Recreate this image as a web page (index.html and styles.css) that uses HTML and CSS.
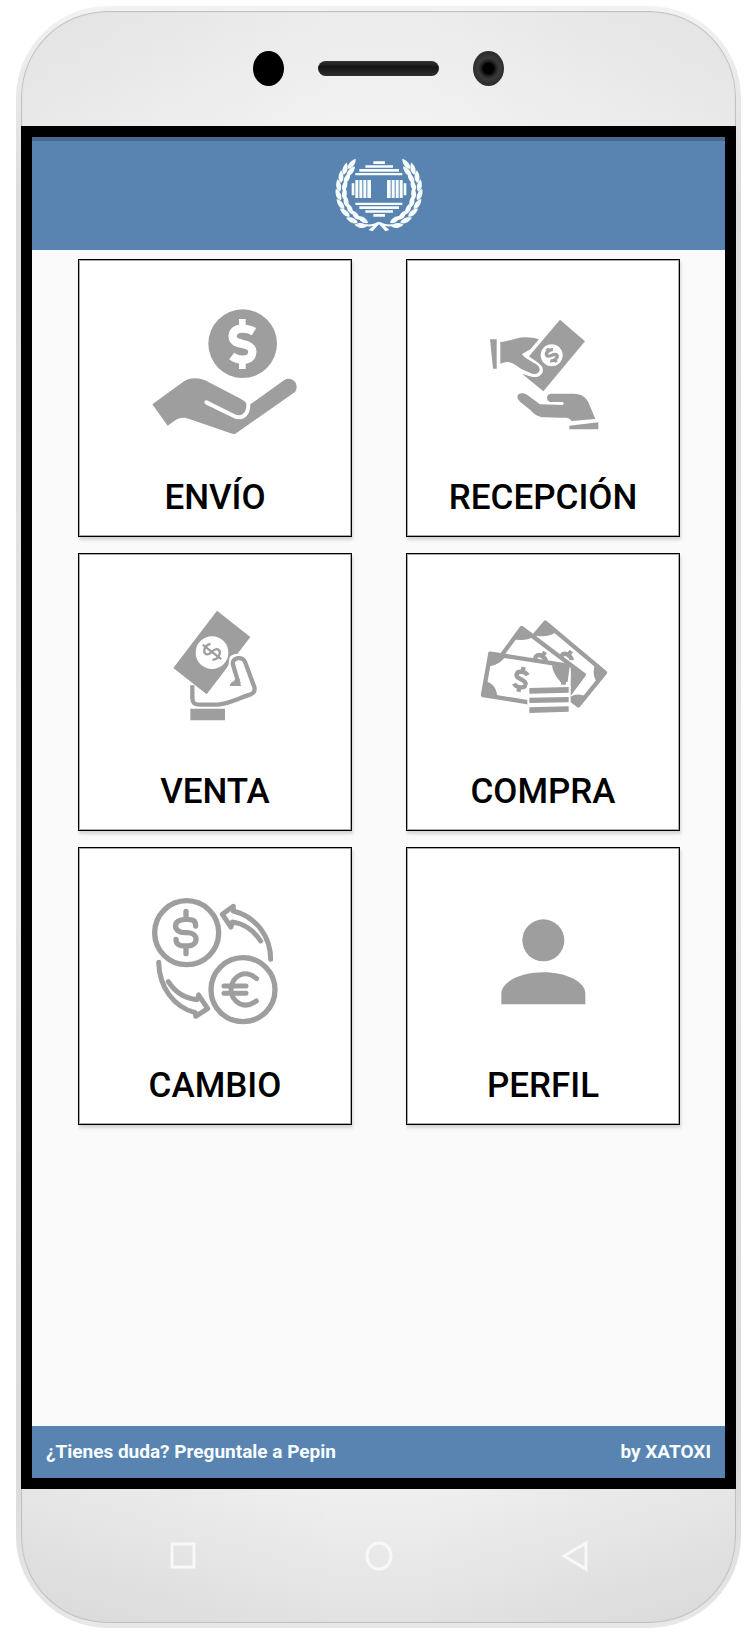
FILE: index.html
```html
<!DOCTYPE html>
<html lang="es">
<head>
<meta charset="utf-8">
<meta name="viewport" content="width=device-width, initial-scale=1">
<title>XATOXI</title>
<link rel="stylesheet" href="styles.css">
</head>
<body>
<div class="phone">
  <div class="shell">
    <div class="sensors">
      <span class="sensor"></span>
      <span class="speaker"></span>
      <span class="sensor camera"></span>
    </div>

    <div class="screen">
      <header class="topbar">
        <svg class="logo" viewBox="0 0 354 300" role="img" aria-label="Logo">
          <defs>
            <path id="leaf" d="M0 4C-11 -4 -10 -20 -1 -34C9 -22 9 -6 0 4Z"/>
            <g id="pair">
              <use href="#leaf" transform="translate(-6 0) rotate(-10)"/>
              <use href="#leaf" transform="translate(6 0) rotate(16)"/>
            </g>
            <g id="branch">
              <use href="#leaf" transform="translate(87 72) rotate(38)"/>
              <use href="#pair" transform="translate(78 91) rotate(24)"/>
              <use href="#pair" transform="translate(69 114) rotate(12)"/>
              <use href="#pair" transform="translate(65 139) rotate(0)"/>
              <use href="#pair" transform="translate(67 164) rotate(-12)"/>
              <use href="#pair" transform="translate(76 189) rotate(-26)"/>
              <use href="#pair" transform="translate(91 211) rotate(-40)"/>
              <use href="#pair" transform="translate(113 229) rotate(-56)"/>
              <use href="#pair" transform="translate(139 240) rotate(-72)"/>
              <path d="M136 240C150 243 162 240 174 233L180 238C172 246 164 254 158 262L146 258L160 245C150 248 142 248 136 245Z"/>
            </g>
          </defs>
          <g fill="#f7fdfd">
            <use href="#branch"/>
            <use href="#branch" transform="translate(354 0) scale(-1 1)"/>
            <path d="M160 52h35v8h-35zM136 64h83v7h-83zM118 75h119v8H118zM106 87h141v7H106zM106 176h141v7H106zM118 187h119v8H118zM136 199h83v7h-83zM160 210h35v8h-35z"/>
            <path d="M95 118h8v36h-8zM106 108h9v54h-9zM118 108h9v54h-9zM130 108h9v54h-9zM142 108h11v54h-11zM201 108h11v54h-11zM215 108h9v54h-9zM227 108h9v54h-9zM239 108h9v54h-9zM251 118h8v36h-8z"/>
          </g>
        </svg>
      </header>

      <main class="menu">
        <button class="card" type="button">
          <svg class="icon" viewBox="27 29 816 600" aria-hidden="true">
            <circle cx="518" cy="280" r="103" fill="#9e9e9e"/>
            <g fill="none" stroke="#fff">
              <path d="M552 244C542 238 530 235 516 235C498 235 488 244 488 258C488 274 500 277 518 281C537 285 547 290 547 304C547 320 536 328 518 328C503 328 494 324 485 317" stroke-width="25"/>
              <path d="M517 206v24M517 332v24" stroke-width="20"/>
            </g>
            <path fill="#9e9e9e" d="M247 462L340 394C358 381 385 381 405 390L512 445C524 452 532 462 541 462L642 390C665 375 690 400 676 424L495 551Q490 552 482 549L358 506C340 499 328 502 317 509L293 526Z"/>
            <path d="M409 456L492 497C514 508 536 494 535 462L532 445" fill="none" stroke="#fff" stroke-width="12" stroke-linecap="round"/>
          </svg>
          <span class="label">ENVÍO</span>
        </button>

        <button class="card" type="button">
          <svg class="icon" viewBox="21 29 816 600" aria-hidden="true">
            <g fill="#9e9e9e">
              <path d="M270 267H290V355H279Z"/>
              <path d="M301 275C330 274 345 262 370 261C390 260 404 263 417 267L391 297L366 311C370 322 398 333 412 345C424 354 420 369 406 371C396 372 386 366 372 360C350 350 345 337 322 335C312 335 308 339 301 340Z"/>
              <path d="M480 208L555 273L430 423L366 370C390 377 402 383 414 379C430 373 434 355 421 343C412 334 398 328 387 318Z"/>
              <path d="M352 440C352 427 370 426 382 434L420 462L488 464Q494 460 488 455L450 455C438 450 438 432 452 430L520 430C545 430 560 442 567 460L586 506L515 512C505 500 500 502 480 502L435 501C410 500 400 488 390 478L360 454Q352 447 352 440Z"/>
              <path d="M508 526L595 516V537H508Z"/>
            </g>
            <circle cx="455" cy="315" r="33" fill="#fff"/>
            <g transform="translate(455 315) rotate(-35)" fill="none" stroke="#9e9e9e" stroke-width="10">
              <path d="M13 -12C6 -18 -12 -18 -12 -8C-12 2 13 -2 13 8C13 18 -7 18 -13 11M0 -25V-15M0 15V25"/>
            </g>
          </svg>
          <span class="label">RECEPCIÓN</span>
        </button>

        <button class="card" type="button">
          <svg class="icon" viewBox="27 26 816 600" aria-hidden="true">
            <path d="M441 196L541 275L410 447L310 368Z" fill="#9e9e9e"/>
            <circle cx="426" cy="322" r="49" fill="#fff"/>
            <path d="M475 360L479 335Q492 322 520 327L540 350L530 400L480 420L455 400Z" fill="#fff"/>
            <g transform="translate(426 320) rotate(-52)" fill="none" stroke="#9e9e9e" stroke-width="7">
              <path d="M16 -18C6 -30 -18 -24 -16 -10C-14 4 17 -6 17 11C17 26 -10 28 -17 15M0 -35V35"/>
            </g>
            <path d="M506 415L489 358C484 336 520 330 526 352L553 425C556 437 550 445 540 448C500 461 480 474 445 478L390 478C374 478 367 474 367 458L367 420" fill="none" stroke="#9e9e9e" stroke-width="13"/>
            <path d="M495 400C495 410 485 406 480 418V422H513L508 400ZM361 490H465V525H361Z" fill="#9e9e9e"/>
          </svg>
          <span class="label">VENTA</span>
        </button>

        <button class="card" type="button">
          <svg class="icon" viewBox="21 26 816 600" aria-hidden="true">
            <defs>
              <path id="dollar" d="M17 -16C10 -25 -15 -26 -16 -11C-16 4 17 -5 17 13C16 27 -10 27 -18 17M0 -38V-22M0 22V38"/>
            </defs>
            <g fill="#fff" stroke="#9e9e9e" stroke-width="13" stroke-linejoin="round">
              <path d="M370 310L436 232L615 382L535 480L450 410Z"/>
              <use href="#dollar" transform="translate(492 348) rotate(35)" fill="none" stroke-width="13"/>
              <g fill="#9e9e9e" stroke="none">
                <path d="M436 226L400 268C420 275 448 275 468 260ZM621 382L588 352C576 375 580 398 594 414ZM535 486L511 470V455C525 445 545 445 562 456Z"/>
              </g>
              <path d="M305 330L365 248L551 388L510 444L440 480L300 400Z"/>
              <use href="#dollar" transform="translate(415 352) rotate(32)" fill="none" stroke-width="13"/>
              <g fill="#9e9e9e" stroke="none">
                <path d="M365 242L334 280C358 286 382 286 400 274ZM557 388L514 447C508 420 516 400 511 360Z"/>
              </g>
              <path d="M271 325L503 361L495 420L478 486L249 449Z"/>
              <use href="#dollar" transform="translate(363 402) rotate(12)" fill="none" stroke-width="13"/>
              <g fill="#9e9e9e" stroke="none">
                <path d="M266 319L318 330C312 345 290 362 262 364ZM243 452L257 408C280 414 290 430 293 458ZM456 360L507 362L497 418H483C483 402 462 398 456 360Z"/>
              </g>
            </g>
            <path d="M382 418H512V510H382ZM474 418V410H508V418Z" fill="#fff"/>
            <path d="M484 400L505 365L497 418H483Z" fill="#9e9e9e"/>
            <path d="M388 428L506 425V442L388 445ZM388 457L506 455V471L388 473ZM388 486L506 483V499L388 503Z" fill="#9e9e9e"/>
          </svg>
          <span class="label">COMPRA</span>
        </button>

        <button class="card" type="button">
          <svg class="icon" viewBox="27 23 816 600" aria-hidden="true">
            <g fill="none" stroke="#9e9e9e" stroke-width="16" stroke-linecap="round" stroke-linejoin="round">
              <circle cx="350" cy="277" r="96"/>
              <circle cx="519" cy="448" r="96"/>
              <path d="M377 257C377 240 368 237 350 237H345C307 237 307 277 345 277H352C387 277 387 317 352 317H345C328 317 318 313 318 297M348 213V237M348 317V340"/>
              <path d="M560 415C525 385 488 405 483 445C485 490 525 508 559 482M462 437H528M462 459H528" stroke-width="15"/>
              <path stroke-width="15" d="M602 357C602 290 560 230 490 212V198L457 222L483 260L487 245C525 250 555 275 572 302"/>
              <path stroke-width="15" d="M266 366C268 440 310 500 376 517L377 528L413 505L386 464L382 478C345 475 315 455 295 424"/>
            </g>
          </svg>
          <span class="label">CAMBIO</span>
        </button>

        <button class="card" type="button">
          <svg class="icon" viewBox="21 23 816 600" aria-hidden="true">
            <circle cx="430" cy="300" r="63" fill="#9e9e9e"/>
            <path d="M304 492V460C304 425 360 396 430 396C500 396 556 425 556 460V492Z" fill="#9e9e9e"/>
          </svg>
          <span class="label">PERFIL</span>
        </button>
      </main>

      <footer class="bottombar">
        <a class="help" href="#ayuda">¿Tienes duda? Preguntale a Pepin</a>
        <span>by XATOXI</span>
      </footer>
    </div>

    <nav class="keys">
      <button class="key" type="button" aria-label="Recientes">
        <svg viewBox="0 0 32 36"><rect x="5" y="6" width="22" height="23"/></svg>
      </button>
      <button class="key" type="button" aria-label="Inicio">
        <svg viewBox="0 0 32 36"><ellipse cx="16" cy="18" rx="12" ry="13"/></svg>
      </button>
      <button class="key" type="button" aria-label="Atrás">
        <svg viewBox="0 0 32 36"><path d="M5 18L27 5V31Z"/></svg>
      </button>
    </nav>
  </div>
</div>
</body>
</html>
```

FILE: styles.css
```css
* {
  box-sizing: border-box;
}

body {
  margin: 0;
  min-height: 100vh;
  display: flex;
  padding: 6px 9px 9px 16px;
  background: #fff;
  font-family: Roboto, "Liberation Sans", sans-serif;
}

.phone {
  flex: 1;
  display: flex;
  padding: 5px;
  border-radius: 92px;
  background: linear-gradient(#f2f2f2, #dcdcdc 12%, #e6e6e6 50%, #dadada 90%, #e8e8e8);
}

.shell {
  flex: 1;
  display: flex;
  flex-direction: column;
  border-radius: 86px;
  background: linear-gradient(to right, #0000000a, #00000000 45%, #00000000 55%, #0000000a),
    linear-gradient(#ececec, #f2f2f2 7%, #efefef 92%, #e2e2e2);
  box-shadow: inset 0 0 1px 1px #bdbdbd;
}

.sensors {
  display: flex;
  justify-content: center;
  align-items: center;
  gap: 34px;
  height: 115px;
}

.sensor {
  width: 31px;
  height: 35px;
  border-radius: 50%;
  background: #000;
}

.camera {
  background: radial-gradient(circle, #000 22%, #1c1c1c 30%, #3a3a3a 45%, #2c2c2c 70%);
}

.speaker {
  width: 121px;
  height: 15px;
  border-radius: 8px;
  background: linear-gradient(#333, #151515 40%, #2e2e2e);
}

.screen {
  flex: 1;
  display: flex;
  flex-direction: column;
  border: 11px solid #000;
  background: #fafafa;
}

.topbar {
  display: flex;
  justify-content: center;
  padding: 7px 0 6px;
  background: #5984b1;
  box-shadow: inset 0 4px 0 #486a8c;
}

.logo {
  width: 118px;
  height: 100px;
}

.menu {
  flex: 1;
  display: grid;
  grid-template-columns: 1fr 1fr;
  align-content: start;
  gap: 16px 54px;
  padding: 9px 45px 48px 46px;
}

.card {
  display: flex;
  flex-direction: column;
  align-items: center;
  padding: 0 0 18px;
  border: 1px solid #000;
  background: #fff;
  box-shadow: inset 0 0 0 1px #00000055, 1px 3px 3px #00000026;
  color: #000;
  font: inherit;
  cursor: pointer;
}

.icon {
  width: 100%;
  height: 200px;
}

.label {
  padding-top: 18px;
  font-size: 35px;
  font-weight: 500;
  line-height: 40px;
}

.bottombar {
  display: flex;
  justify-content: space-between;
  align-items: center;
  padding: 14px;
  background: #5984b1;
  color: #f7fdff;
  font-size: 19px;
  font-weight: 700;
  line-height: 24px;
}

.help {
  color: inherit;
  text-decoration: none;
}

.keys {
  display: flex;
  justify-content: center;
  align-items: center;
  gap: 164px;
  height: 134px;
}

.key {
  width: 32px;
  height: 36px;
  padding: 0;
  border: 0;
  background: none;
}

.key svg {
  display: block;
  fill: none;
  stroke: #f8f8f8;
  stroke-width: 3;
}
```
